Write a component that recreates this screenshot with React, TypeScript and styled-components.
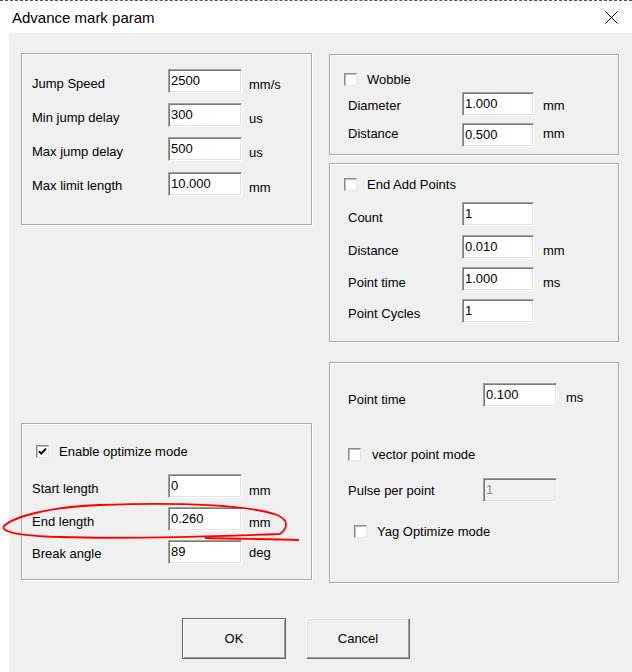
import styled, { createGlobalStyle } from 'styled-components'

const GlobalStyle = createGlobalStyle`
  body {
    margin: 0;
    background: #ffffff;
    font-family: "Liberation Sans", Arial, sans-serif;
    font-size: 13px;
    color: #000000;
  }
`

interface FieldProps {
  label: string
  value: string
  unit?: string
  labelW: number
  inputW: number
  unitGap: number
  mt?: number
  ml?: number
  lt?: number
  ut?: number
  disabled?: boolean
}

const Field = (props: FieldProps) => (
  <FieldRow $mt={props.mt ?? 0} $ml={props.ml ?? 0} $labelW={props.labelW} $inputW={props.inputW}>
    <FieldLabel $top={props.lt ?? 7}>{props.label}</FieldLabel>
    <TextBox readOnly disabled={props.disabled} defaultValue={props.value} />
    {props.unit && (
      <FieldLabel $top={props.ut ?? 8} $left={props.unitGap}>
        {props.unit}
      </FieldLabel>
    )}
  </FieldRow>
)

interface CheckProps {
  label: string
  checked?: boolean
  mt?: number
  ml?: number
  gap?: number
}

const Check = (props: CheckProps) => (
  <CheckRow $mt={props.mt ?? 0} $ml={props.ml ?? 0} $gap={props.gap ?? 10}>
    <CheckBox>
      {props.checked && (
        <svg width="11" height="11" viewBox="0 0 11 11">
          <path d="M2 5.2 L4.3 7.6 L9 2.6" fill="none" stroke="#000" strokeWidth="2" />
        </svg>
      )}
    </CheckBox>
    <span>{props.label}</span>
  </CheckRow>
)

export default function App() {
  return (
    <Window>
      <GlobalStyle />
      <TitleBar>
        <Title>Advance mark param</Title>
        <svg width="13" height="13" viewBox="0 0 13 13">
          <path d="M0.5 0.5 L12.5 12.5 M12.5 0.5 L0.5 12.5" stroke="#000" strokeWidth="1" />
        </svg>
      </TitleBar>

      <Body>
        <Columns>
          <Column>
            <Group $h={172} $pt={15} $pl={10}>
              <Field label="Jump Speed" value="2500" unit="mm/s" labelW={136} inputW={74} unitGap={7} />
              <Field label="Min jump delay" value="300" unit="us" labelW={136} inputW={74} unitGap={7} mt={10} />
              <Field label="Max jump delay" value="500" unit="us" labelW={136} inputW={74} unitGap={7} mt={10} />
              <Field label="Max limit length" value="10.000" unit="mm" labelW={136} inputW={74} unitGap={7} mt={11} lt={6} />
            </Group>

            <Group $h={157} $mt={198} $pt={20} $pl={10}>
              <Check label="Enable optimize mode" checked ml={4} />
              <Field label="Start length" value="0" unit="mm" labelW={136} inputW={74} unitGap={7} mt={15} ut={9} />
              <Field label="End length" value="0.260" unit="mm" labelW={136} inputW={74} unitGap={7} mt={9} />
              <Field label="Break angle" value="89" unit="deg" labelW={136} inputW={74} unitGap={7} mt={9} lt={6} ut={5} />
            </Group>
          </Column>

          <Column>
            <Group $h={101} $mt={1} $pt={17} $pl={14}>
              <Check label="Wobble" />
              <Field label="Diameter" value="1.000" unit="mm" labelW={114} inputW={72} unitGap={9} mt={5} ml={4} lt={6} ut={6} />
              <Field label="Distance" value="0.500" unit="mm" labelW={114} inputW={72} unitGap={9} mt={7} ml={4} lt={3} ut={3} />
            </Group>

            <Group $h={179} $mt={8} $pt={13} $pl={14}>
              <Check label="End Add Points" />
              <Field label="Count" value="1" labelW={114} inputW={72} unitGap={9} mt={10} ml={4} lt={8} />
              <Field label="Distance" value="0.010" unit="mm" labelW={114} inputW={72} unitGap={9} mt={9} ml={4} lt={8} ut={8} />
              <Field label="Point time" value="1.000" unit="ms" labelW={114} inputW={72} unitGap={9} mt={8} ml={4} lt={8} ut={8} />
              <Field label="Point Cycles" value="1" labelW={114} inputW={72} unitGap={9} mt={8} ml={4} lt={7} />
            </Group>

            <Group $h={221} $mt={20} $pt={20} $pl={18}>
              <Field label="Point time" value="0.100" unit="ms" labelW={135} inputW={74} unitGap={9} lt={9} ut={7} />
              <Check label="vector point mode" mt={40} gap={11} />
              <Field label="Pulse per point" value="1" labelW={135} inputW={74} unitGap={9} mt={16} lt={5} disabled />
              <Check label="Yag Optimize mode" mt={22} ml={6} />
            </Group>
          </Column>
        </Columns>

        <ButtonRow>
          <Button $default>OK</Button>
          <Button>Cancel</Button>
        </ButtonRow>
      </Body>

      <Scribble width="310" height="55" viewBox="0 495 310 55">
        <path
          d="M280 534 C288 528, 289 520, 277 515 C250 505, 180 502, 100 505 C50 507, 15 516, 4 526 C0 532, 20 536, 60 537 C120 539, 200 537, 280 534"
          fill="none"
          stroke="#ff0000"
          strokeWidth="1.8"
        />
        <path d="M205 538 C240 539, 270 539, 299 540" fill="none" stroke="#ff0000" strokeWidth="1.8" />
      </Scribble>
    </Window>
  )
}

const Window = styled.div`
  position: relative;
  width: 632px;
  height: 672px;
  background: #ffffff;
  overflow: hidden;
`

const TitleBar = styled.div`
  height: 33px;
  box-sizing: border-box;
  border-top: 1px dashed #555555;
  display: flex;
  align-items: center;
  justify-content: space-between;
  padding: 0 14px 0 12px;
`

const Title = styled.span`
  font-size: 15px;
`

const Body = styled.div`
  margin-left: 9px;
  height: 639px;
  box-sizing: border-box;
  background: #f0f0f0;
  padding: 20px 0 0 12px;
`

const Columns = styled.div`
  display: grid;
  grid-template-columns: 291px 290px;
  column-gap: 17px;
  align-items: start;
`

const Column = styled.div`
  display: flex;
  flex-direction: column;
`

const Group = styled.div<{ $h: number; $mt?: number; $pt: number; $pl: number }>`
  height: ${(p) => p.$h}px;
  margin-top: ${(p) => p.$mt ?? 0}px;
  padding: ${(p) => p.$pt}px 0 0 ${(p) => p.$pl}px;
  box-sizing: border-box;
  border: 1px solid #a9a9a9;
  box-shadow: inset 1px 1px 0 #ffffff, 1px 1px 0 #ffffff;
  display: flex;
  flex-direction: column;
`

const FieldRow = styled.div<{ $mt: number; $ml: number; $labelW: number; $inputW: number }>`
  display: grid;
  grid-template-columns: ${(p) => p.$labelW}px ${(p) => p.$inputW}px auto;
  height: 24px;
  margin-top: ${(p) => p.$mt}px;
  margin-left: ${(p) => p.$ml}px;
`

const FieldLabel = styled.span<{ $top: number; $left?: number }>`
  padding-top: ${(p) => p.$top}px;
  padding-left: ${(p) => p.$left ?? 0}px;
  line-height: 15px;
  white-space: nowrap;
`

const TextBox = styled.input`
  width: 100%;
  height: 24px;
  box-sizing: border-box;
  margin: 0;
  padding: 0 1px 1px 2px;
  font-family: "Liberation Sans", Arial, sans-serif;
  font-size: 13px;
  color: #000000;
  background: #ffffff;
  border: 1px solid;
  border-color: #a0a0a0 #ffffff #ffffff #a0a0a0;
  box-shadow: inset 1px 1px 0 #7a7a7a, inset -1px -1px 0 #e3e3e3;
  outline: none;

  &:disabled {
    background: #f0f0f0;
    color: #8d8d8d;
  }
`

const CheckRow = styled.div<{ $mt: number; $ml: number; $gap: number }>`
  display: flex;
  align-items: center;
  gap: ${(p) => p.$gap}px;
  height: 15px;
  line-height: 15px;
  margin-top: ${(p) => p.$mt}px;
  margin-left: ${(p) => p.$ml}px;
  white-space: nowrap;
`

const CheckBox = styled.span`
  width: 13px;
  height: 13px;
  box-sizing: border-box;
  flex: none;
  display: flex;
  align-items: center;
  justify-content: center;
  background: #ffffff;
  border: 1px solid;
  border-color: #8a8a8a #e6e6e6 #e6e6e6 #8a8a8a;
  box-shadow: inset 1px 1px 0 #bdbdbd;
`

const ButtonRow = styled.div`
  display: flex;
  gap: 20px;
  margin: 35px 0 0 161px;
`

const Button = styled.button<{ $default?: boolean }>`
  width: 104px;
  height: 41px;
  box-sizing: border-box;
  margin: 0;
  padding: 0;
  font-family: "Liberation Sans", Arial, sans-serif;
  font-size: 13px;
  color: #000000;
  background: #f0f0f0;
  border: 1px solid;
  border-color: ${(p) => (p.$default ? '#646464' : '#ffffff #696969 #696969 #ffffff')};
  box-shadow: ${(p) =>
    p.$default
      ? 'inset 1px 1px 0 #ffffff, inset -1px -1px 0 #a0a0a0'
      : 'inset -1px -1px 0 #a0a0a0, inset 1px 1px 0 #e3e3e3'};
`

const Scribble = styled.svg`
  position: absolute;
  left: 0;
  top: 495px;
  pointer-events: none;
`
